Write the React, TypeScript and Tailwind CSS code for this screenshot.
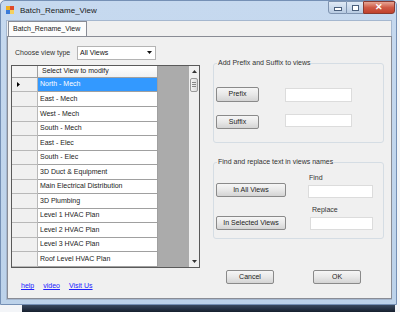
import React from "react";

const views = [
  "North - Mech",
  "East - Mech",
  "West - Mech",
  "South - Mech",
  "East - Elec",
  "South - Elec",
  "3D Duct & Equipment",
  "Main Electrical Distribution",
  "3D Plumbing",
  "Level 1 HVAC Plan",
  "Level 2 HVAC Plan",
  "Level 3 HVAC Plan",
  "Roof Level HVAC Plan",
];

function Btn({ label, w, h = "h-[14px]" }: { label: string; w: string; h?: string }) {
  return (
    <div
      className={`${w} ${h} shrink-0 flex items-center justify-center rounded-[2px] border border-[#8a8a8a] bg-gradient-to-b from-[#f6f6f6] via-[#e8e8e8] to-[#d4d4d4] text-[#222]`}
    >
      {label}
    </div>
  );
}

function TextBox({ w, h = "h-[13px]" }: { w: string; h?: string }) {
  return <div className={`${w} ${h} shrink-0 bg-white border border-[#dcdcdc]`} />;
}

function GroupBox({ title, h, children }: { title: string; h: string; children: React.ReactNode }) {
  return (
    <div className={`relative ml-[1px] w-[171px] ${h} border border-[#d5dde4] rounded-[3px]`}>
      <span className="absolute -top-[6px] left-[3px] bg-[#f0f0f0] px-[1px] leading-[10px] text-[#333]">
        {title}
      </span>
      {children}
    </div>
  );
}

export default function App() {
  return (
    <div className="w-[400px] h-[312px] bg-[#f3f5f8] overflow-hidden flex flex-col font-['Liberation_Sans',Arial,sans-serif] text-[7px] text-[#1e1e1e]">
      {/* window */}
      <div className="w-[397px] h-[305px] shrink-0 flex flex-col rounded-t-[5px] border border-[#7590b5] bg-gradient-to-b from-[#c6d9ef] to-[#bcd2ea]">
        <div className="h-[19px] shrink-0 flex items-start relative">
          <svg width="8" height="8" viewBox="0 0 8 8" className="ml-[5px] mt-[5px]">
            <rect x="0" y="0" width="4" height="4" fill="#f0b020" />
            <rect x="4" y="0" width="4" height="4" fill="#e04a2a" />
            <rect x="0" y="4" width="4" height="4" fill="#3a7ad8" />
            <rect x="4" y="4" width="4" height="4" fill="#f4d060" />
          </svg>
          <span className="ml-[6px] mt-[4px] text-[8px] leading-[11px] text-[#1a1a1a]">Batch_Rename_View</span>
          <div className="ml-auto mr-[1px] flex h-[13px]">
            <div className="w-[19px] h-full border border-[#7e93b0] rounded-bl-[3px] bg-gradient-to-b from-[#dfe9f5] to-[#b8cbe2] flex items-center justify-center">
              <div className="w-[6px] h-[2px] mt-[3px] bg-white border border-[#4a5f7c] box-content" />
            </div>
            <div className="w-[16px] h-full border-y border-[#7e93b0] bg-gradient-to-b from-[#dfe9f5] to-[#b8cbe2] flex items-center justify-center">
              <div className="w-[5px] h-[3px] border-[2px] border-white outline outline-1 outline-[#4a5f7c]" />
            </div>
            <div className="w-[32px] h-full border border-[#8a3a30] rounded-br-[3px] bg-gradient-to-b from-[#e5a595] via-[#cf5a46] to-[#c0412c] flex items-center justify-center text-white text-[9px] font-bold leading-none">
              ✕
            </div>
          </div>
        </div>

        {/* client area */}
        <div className="ml-[5px] w-[386px] h-[280px] bg-[#f0f0f0] border border-[#a5b7cf] flex flex-col">
          <div className="ml-[1px] mt-[0px] w-[79px] h-[15px] border border-b-0 border-[#898c95] bg-[#fcfcfc] pl-[4px] flex items-center text-[#222]">
            Batch_Rename_View
          </div>
          <div className="w-[385px] h-[264px] border border-[#898c95] bg-[#f0f0f0] flex">
            {/* left column */}
            <div className="ml-[3px] w-[189px] flex flex-col">
              <div className="mt-[9px] h-[14px] flex items-center">
                <span className="ml-[4px] w-[62px] text-[#333]">Choose view type</span>
                <div className="w-[79px] h-[14px] bg-white border border-[#b4b4b4] flex items-center pl-[2px] text-[#111]">
                  All Views
                  <svg width="5" height="3" viewBox="0 0 5 3" className="ml-auto mr-[3px]">
                    <path d="M0 0h5L2.5 3z" fill="#111" />
                  </svg>
                </div>
              </div>

              {/* data grid */}
              <div className="mt-[5px] w-[189px] h-[203px] border border-[#5a5a5a] bg-[#ababab] flex">
                <div className="w-[177px] flex flex-col">
                  <div className="h-[12px] flex shrink-0">
                    <div className="w-[26px] border-r border-b border-[#a0a0a0] bg-[#f4f4f4]" />
                    <div className="w-[120px] border-r border-b border-[#a0a0a0] bg-gradient-to-b from-white to-[#f1f1f1] pl-[4px] flex items-center text-[#222]">
                      Select View to modify
                    </div>
                  </div>
                  {views.map((v, i) => (
                    <div key={v} className="flex-1 flex">
                      <div className="w-[26px] border-r border-b border-[#b8b8b8] bg-[#f0f0f0] flex items-center pl-[5px]">
                        {i === 0 && (
                          <svg width="3" height="5" viewBox="0 0 3 5">
                            <path d="M0 0l3 2.5L0 5z" fill="#000" />
                          </svg>
                        )}
                      </div>
                      <div
                        className={`w-[120px] border-r border-b border-[#a0a0a0] flex items-center pl-[2px] ${
                          i === 0 ? "bg-[#3399ff] text-white" : "bg-white text-[#222]"
                        }`}
                      >
                        {v}
                      </div>
                    </div>
                  ))}
                </div>
                {/* scrollbar */}
                <div className="w-[10px] bg-[#f0f0f0] flex flex-col items-center">
                  <svg width="5" height="3" viewBox="0 0 5 3" className="mt-[4px]">
                    <path d="M0 3h5L2.5 0z" fill="#333" />
                  </svg>
                  <div className="mt-[5px] w-[8px] h-[14px] rounded-[2px] border border-[#9a9a9a] bg-gradient-to-r from-[#f4f4f4] to-[#dcdcdc] flex flex-col items-center justify-center gap-[1px]">
                    <div className="w-[4px] h-px bg-[#888]" />
                    <div className="w-[4px] h-px bg-[#888]" />
                    <div className="w-[4px] h-px bg-[#888]" />
                  </div>
                  <svg width="5" height="3" viewBox="0 0 5 3" className="mt-auto mb-[4px]">
                    <path d="M0 0h5L2.5 3z" fill="#333" />
                  </svg>
                </div>
              </div>

              <div className="mt-[13px] pl-[10px] flex gap-[9px] text-[#2020ff] underline">
                <span>help</span>
                <span>video</span>
                <span>Visit Us</span>
              </div>
            </div>

            {/* right column */}
            <div className="ml-[12px] w-[173px] flex flex-col">
              <div className="mt-[26px]">
                <GroupBox title="Add Prefix and Suffix to views" h="h-[80px]">
                  <div className="pl-[2px] mt-[23px] flex items-start">
                    <Btn label="Prefix" w="w-[43px]" h="h-[15px]" />
                    <div className="ml-[26px] mt-[1px]">
                      <TextBox w="w-[67px]" h="h-[14px]" />
                    </div>
                  </div>
                  <div className="pl-[2px] mt-[13px] flex items-start">
                    <Btn label="Suffix" w="w-[43px]" />
                    <div className="ml-[26px] -mt-[1px]">
                      <TextBox w="w-[67px]" />
                    </div>
                  </div>
                </GroupBox>
              </div>

              <div className="mt-[19px]">
                <GroupBox title="Find and replace text in views names" h="h-[77px]">
                  <div className="flex items-start pl-[2px]">
                    <div className="mt-[20px]">
                      <Btn label="In All Views" w="w-[70px]" />
                    </div>
                    <div className="ml-[22px] mt-[9px] flex flex-col">
                      <span className="ml-[1px] h-[11px] leading-[11px] text-[#333]">Find</span>
                      <div className="mt-[2px]">
                        <TextBox w="w-[65px]" />
                      </div>
                    </div>
                  </div>
                  <div className="flex items-start pl-[2px]">
                    <div className="mt-[18px]">
                      <Btn label="In Selected Views" w="w-[70px]" />
                    </div>
                    <div className="ml-[24px] mt-[6px] flex flex-col">
                      <span className="ml-[2px] h-[11px] leading-[11px] text-[#333]">Replace</span>
                      <div className="mt-[2px]">
                        <TextBox w="w-[63px]" />
                      </div>
                    </div>
                  </div>
                </GroupBox>
              </div>

              <div className="mt-[31px] ml-[14px] flex gap-[39px]">
                <Btn label="Cancel" w="w-[48px]" />
                <Btn label="OK" w="w-[48px]" />
              </div>
            </div>
          </div>
        </div>
      </div>
      {/* desktop strip below window */}
      <div className="flex-1 flex">
        <div className="w-[22px]" />
        <div className="w-[373px] bg-gradient-to-b from-[#3a4a60] to-[#16202e]" />
      </div>
    </div>
  );
}
